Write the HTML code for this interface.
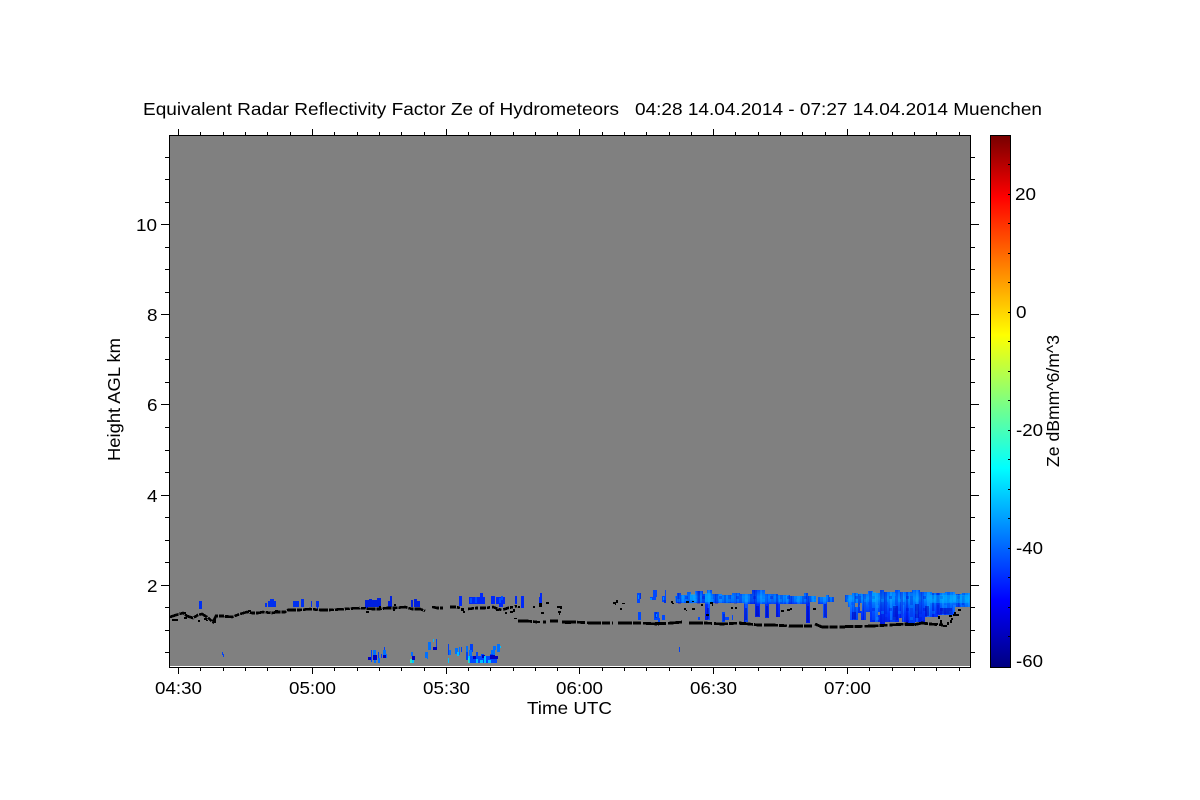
<!DOCTYPE html>
<html>
<head>
<meta charset="utf-8">
<title>Equivalent Radar Reflectivity Factor Ze of Hydrometeors</title>
<style>
html,body{margin:0;padding:0;background:#fff;width:1200px;height:800px;overflow:hidden}
svg{display:block}
text{font-family:"Liberation Sans",Arial,sans-serif;font-size:17.5px;fill:#000}
</style>
</head>
<body>
<svg width="1200" height="800" viewBox="0 0 1200 800" xmlns="http://www.w3.org/2000/svg">
<defs>
<linearGradient id="jet" x1="0" y1="0" x2="0" y2="1">
<stop offset="0" stop-color="#780000"/>
<stop offset=".115" stop-color="#ff0000"/>
<stop offset=".375" stop-color="#ffff00"/>
<stop offset=".625" stop-color="#00ffff"/>
<stop offset=".875" stop-color="#0000ff"/>
<stop offset="1" stop-color="#000080"/>
</linearGradient>
<linearGradient id="bandG" gradientUnits="userSpaceOnUse" x1="0" y1="590" x2="0" y2="624">
<stop offset="0" stop-color="#0048ff"/>
<stop offset=".2" stop-color="#0080ff"/>
<stop offset=".33" stop-color="#0070ff"/>
<stop offset=".42" stop-color="#0030ff"/>
<stop offset="1" stop-color="#0018e0"/>
</linearGradient>
<linearGradient id="bandR" gradientUnits="userSpaceOnUse" x1="0" y1="590" x2="0" y2="624">
<stop offset="0" stop-color="#0060ff"/>
<stop offset=".25" stop-color="#0090ff"/>
<stop offset=".45" stop-color="#0060ff"/>
<stop offset=".7" stop-color="#0034ff"/>
<stop offset="1" stop-color="#0020e8"/>
</linearGradient>
<pattern id="st1" patternUnits="userSpaceOnUse" x="0" y="0" width="26" height="40">
<rect x="0" y="0" width="3" height="40" fill="#0020e0" fill-opacity=".5"/>
<rect x="6" y="0" width="2" height="40" fill="#20c0ff" fill-opacity=".3"/>
<rect x="11" y="0" width="3" height="40" fill="#0030f0" fill-opacity=".45"/>
<rect x="17" y="0" width="3" height="40" fill="#30c8ff" fill-opacity=".25"/>
<rect x="22" y="0" width="2" height="40" fill="#0000c0" fill-opacity=".35"/>
</pattern>
<pattern id="st2" patternUnits="userSpaceOnUse" x="0" y="0" width="37" height="40">
<rect x="2" y="0" width="5" height="40" fill="#00b0ff" fill-opacity=".2"/>
<rect x="12" y="0" width="3" height="40" fill="#0000d0" fill-opacity=".35"/>
<rect x="21" y="0" width="6" height="40" fill="#00a0ff" fill-opacity=".2"/>
<rect x="31" y="0" width="3" height="40" fill="#0010d0" fill-opacity=".3"/>
</pattern>
<pattern id="st3" patternUnits="userSpaceOnUse" x="1" y="590" width="17" height="12">
<rect x="0" y="0" width="3" height="3" fill="#0040ff" fill-opacity=".4"/>
<rect x="8" y="3" width="3" height="3" fill="#00a0ff" fill-opacity=".35"/>
<rect x="4" y="6" width="3" height="3" fill="#0000d8" fill-opacity=".35"/>
<rect x="13" y="9" width="3" height="3" fill="#00b0ff" fill-opacity=".3"/>
</pattern>
</defs>

<!-- plot background -->
<rect x="170" y="136" width="800" height="530" fill="#808080"/>
<rect x="170" y="666" width="800" height="1" fill="#fff"/>

<g shape-rendering="crispEdges">
<!-- upper sparse echoes -->
<path fill="#0030f0" d="M199 601h3v8h-3zM265 603h2v4h-2zM268 601h8v6h-8zM270 599h4v2h-4zM293 601h6v6h-6zM301 599h3v8h-3zM311 601h1v6h-1zM316 601h3v6h-3zM317 607h1v2h-1z"/>
<path fill="#0020e0" d="M365 600h16v7h-16zM365 607h3v1h-3zM369 599h3v1h-3zM377 598h4v2h-4zM388 601h4v6h-4zM390 596h2v5h-2zM411 600h2v7h-2zM414 599h3v8h-3zM417 601h3v6h-3z"/>
<path fill="#0028f8" d="M459 596h3v10h-3zM469 597h16v7h-16zM480 593h3v4h-3zM491 596h4v8h-4zM496 597h9v7h-9zM499 604h4v3h-4zM515 596h2v8h-2zM521 596h3v12h-3zM539 597h3v8h-3zM540 593h2v4h-2z"/>
<path fill="#0050ff" d="M470 598h2v5h-2zM475 597h2v6h-2zM499 598h2v5h-2zM501 596h2v4h-2z"/>

<!-- lower cluster -->
<path fill="#0040f8" d="M371 650h1v12h-1zM222 652h1v3h-1zM223 654h1v3h-1zM378 652h1v6h-1zM381 654h1v4h-1zM384 647h1v11h-1zM448 644h1v11h-1zM436 639h1v11h-1zM466 652h2v8h-2zM470 644h3v8h-3zM461 647h1v5h-1zM679 647h1v5h-1z"/>
<path fill="#0070ff" d="M373 650h3v5h-3zM374 660h2v3h-2zM378 658h2v5h-2zM383 650h3v5h-3zM386 654h1v4h-1zM411 652h2v4h-2zM428 642h3v8h-3zM425 652h3v6h-3zM427 656h1v3h-1zM455 648h3v6h-3zM459 647h1v8h-1zM449 650h2v5h-2zM466 646h2v6h-2zM469 650h3v8h-3zM491 650h4v5h-4zM497 644h3v8h-3zM493 646h3v4h-3z"/>
<path fill="#0048ff" d="M470 656h27v7h-27zM476 652h2v4h-2zM481 654h3v4h-3zM490 654h3v4h-3z"/>
<path fill="#0000c0" d="M368 657h3v3h-3zM373 655h4v5h-4zM383 655h3v3h-3zM412 656h3v4h-3zM433 647h4v3h-4zM473 656h3v3h-3zM482 655h3v3h-3zM490 655h5v4h-5zM494 656h4v3h-4z"/>
<path fill="#00c0ff" d="M412 660h2v3h-2zM448 658h1v5h-1zM457 652h2v4h-2zM468 656h2v7h-2zM476 659h2v4h-2zM484 656h2v7h-2zM480 660h3v3h-3zM488 660h3v3h-3zM433 639h1v3h-1zM500 646h1v2h-1z"/>
<path fill="#30e0c0" d="M410 659h2v4h-2zM468 658h1v5h-1z"/>

<!-- mid area sparse echoes -->
<path fill="#0048ff" d="M637 593h3v10h-3zM638 612h3v8h-3zM650 597h6v3h-6zM653 590h4v7h-4zM654 612h5v8h-5zM658 618h2v4h-2zM662 596h4v6h-4zM665 590h1v6h-1zM662 615h3v5h-3zM698 617h2v3h-2zM722 612h3v10h-3zM725 617h4v3h-4zM732 615h1v5h-1z"/>
<path fill="#0030e0" d="M664 600h2v3h-2zM640 593h1v6h-1zM655 612h2v6h-2zM723 614h2v7h-2z"/>
<path fill="#0090ff" d="M650 598h2v2h-2zM638 595h1v4h-1zM656 614h1v3h-1zM663 597h1v3h-1z"/>

<!-- main bands -->
<path fill="url(#bandG)" d="M675 596H677V593H681V595H687V592H691V595H695V591H703V594H707V590H712V594H722V595H732V593H740V594H752V590H765V594H778V595H790V596H804V593H808V596H816V602H810V623H806V604H780V617H776V604H769V618H765V604H760V617H755V604H748V622H744V603H710V620H705V603H676Z"/>
<path fill="url(#bandG)" d="M818 597H826V595H829V597H834V602H827V618H823V604H818Z"/>
<path fill="url(#bandR)" d="M845 595H852V593H858V594H868V591H873V593H880V590H884V592H895V590H900V592H912V590H920V592H932V593H945V592H955V594H962V593H970V607H955V615H938V617H925V622H915V624H906V622H885V624H880V622H870V612H866V620H861V613H858V620H850V607H848V602H845Z"/>
<path fill="url(#st1)" d="M675 596H677V593H681V595H687V592H691V595H695V591H703V594H707V590H712V594H722V595H732V593H740V594H752V590H765V594H778V595H790V596H804V593H808V596H816V602H810V623H806V604H780V617H776V604H769V618H765V604H760V617H755V604H748V622H744V603H710V620H705V603H676ZM818 597H826V595H829V597H834V602H827V618H823V604H818ZM845 595H852V593H858V594H868V591H873V593H880V590H884V592H895V590H900V592H912V590H920V592H932V593H945V592H955V594H962V593H970V607H955V615H938V617H925V622H915V624H906V622H885V624H880V622H870V612H866V620H861V613H858V620H850V607H848V602H845Z"/>
<path fill="url(#st2)" d="M675 596H677V593H681V595H687V592H691V595H695V591H703V594H707V590H712V594H722V595H732V593H740V594H752V590H765V594H778V595H790V596H804V593H808V596H816V602H810V604H676ZM845 595H852V593H858V594H868V591H873V593H880V590H884V592H895V590H900V592H912V590H920V592H932V593H945V592H955V594H962V593H970V607H955V615H938V617H925V622H915V624H906V622H885V624H880V622H870V612H866V620H861V613H858V620H850V607H848V602H845Z"/>
<path fill="url(#st3)" d="M675 596H816V602H676ZM845 593H970V607H955V615H938V617H925V622H870V607H845Z"/>
<path fill="#00b8ff" fill-opacity=".45" d="M930 595h39v8h-39zM705 593h6v9h-6zM690 594h5v6h-5zM872 592h4v10h-4z"/>
<path fill="#0000b8" fill-opacity=".5" d="M756 606h3v10h-3zM766 606h2v11h-2zM807 606h2v16h-2zM824 604h2v13h-2zM745 608h2v12h-2zM707 608h2v11h-2zM893 606h5v14h-5zM915 604h4v14h-4zM925 606h4v10h-4zM940 608h12v6h-12zM852 612h4v7h-4z"/>
<path fill="#808080" d="M855 603h3v4h-3zM878 612h2v3h-2zM899 618h3v4h-3zM860 603h2v8h-2z"/>

<!-- melting/ceilometer line (black) -->
<g fill="none" stroke="#000" stroke-width="3">
<path stroke-width="2.600" stroke-dasharray="9 1 5 1" d="M170 617L176 615 183 613 187 616 193 618 198 615 202 614 207 617 213 622 216 616 224 616 232 617 240 614 247 612 252 613 258 613 263 612 272 613 277 612 285 612 288 610 292 610 300 610 310 609 320 610 330 610 345 609 360 608 372 609 380 609 387 608 395 608 405 607 412 609 420 609 425 611"/>
<path stroke-width="2.600" stroke-dasharray="6 1 3 2" d="M433 607L437 608 443 608M450 607L456 607 460 608M468 609L476 608 485 608 493 607 498 609 502 610 508 608 513 607 517 606"/>
<path stroke-width="2.800" stroke-dasharray="14 1 8 2" d="M518 621L527 621 537 622M543 622L546 622M550 621L558 621M562 622L575 622 590 623 613 623M618 623L640 623 657 624 672 623 683 622M689 623L705 623 722 624 740 623 758 625 773 625 790 626 812 626M815 624L822 627 840 627 873 626 890 625 907 624 913 625 922 623 930 624 943 625"/>
</g>
<path fill="#000" d="M172 619h6v2h-6zM184 617h3v2h-3zM214 619h2v4h-2zM182 612h4v2h-4zM198 620h2v2h-2zM204 618h3v2h-3zM206 620h2v1h-2zM225 616h3v2h-3zM248 610h3v2h-3zM275 610h3v2h-3zM366 611h3v2h-3zM379 606h2v3h-2zM393 607h2v4h-2zM394 604h2v2h-2zM432 606h2v2h-2zM461 608h3v3h-3zM463 611h2v2h-2zM496 609h3v2h-3zM510 611h3v2h-3zM505 612h2v2h-2zM513 609h2v3h-2zM518 606h2v2h-2zM535 621h5v2h-5zM565 622h6v2h-6zM655 622h8v3h-8zM740 622h6v3h-6zM845 625h7v3h-7zM905 623h9v3h-9z"/>
<path fill="#000" d="M533 606h2v2h-2zM539 603h3v4h-3zM546 602h3v2h-3zM541 612h3v2h-3zM557 606h3v2h-3zM560 606h2v3h-2zM558 611h3v2h-3zM559 613h1v2h-1zM613 602h3v2h-3zM615 604h1v1h-1zM616 600h2v3h-2zM622 603h3v1h-3zM620 608h2v2h-2zM671 601h2v2h-2zM672 603h2v1h-2zM686 601h3v2h-3zM692 601h2v1h-2zM684 608h2v2h-2zM686 610h1v1h-1zM692 608h3v2h-3zM701 604h2v2h-2zM710 602h3v2h-3zM712 604h1v2h-1zM706 614h3v2h-3zM731 607h2v2h-2zM735 607h2v2h-2zM781 610h3v2h-3zM787 609h3v2h-3zM790 608h2v2h-2zM813 608h3v2h-3zM514 618h3v1h-3z"/>
<path fill="#000" d="M940 620h2v5h-2zM943 625h4v2h-4zM947 622h2v3h-2zM950 620h2v3h-2zM938 616h2v3h-2zM949 615h3v2h-3zM953 614h6v2h-6zM951 618h2v2h-2zM954 612h2v2h-2zM958 609h3v2h-3zM934 623h4v2h-4z"/>

<!-- axes -->
<g fill="#000">
<rect x="169" y="135" width="802" height="1"/>
<rect x="169" y="667" width="802" height="1"/>
<rect x="169" y="135" width="1" height="533"/>
<rect x="970" y="135" width="1" height="533"/>
</g>
<path fill="none" stroke="#000" stroke-width="1" d="
M178.5 668V674M312.5 668V674M446.5 668V674M579.5 668V674M713.5 668V674M847.5 668V674
M178.5 135V129M312.5 135V129M446.5 135V129M579.5 135V129M713.5 135V129M847.5 135V129
M200.5 668v3M223.5 668v3M245.5 668v3M267.5 668v3M290.5 668v3M334.5 668v3M357.5 668v3M379.5 668v3M401.5 668v3M424.5 668v3M468.5 668v3M490.5 668v3M513.5 668v3M535.5 668v3M557.5 668v3M602.5 668v3M624.5 668v3M646.5 668v3M669.5 668v3M691.5 668v3M735.5 668v3M758.5 668v3M780.5 668v3M802.5 668v3M825.5 668v3M869.5 668v3M892.5 668v3M914.5 668v3M936.5 668v3M959.5 668v3
M200.5 135v-3M223.5 135v-3M245.5 135v-3M267.5 135v-3M290.5 135v-3M334.5 135v-3M357.5 135v-3M379.5 135v-3M401.5 135v-3M424.5 135v-3M468.5 135v-3M490.5 135v-3M513.5 135v-3M535.5 135v-3M557.5 135v-3M602.5 135v-3M624.5 135v-3M646.5 135v-3M669.5 135v-3M691.5 135v-3M735.5 135v-3M758.5 135v-3M780.5 135v-3M802.5 135v-3M825.5 135v-3M869.5 135v-3M892.5 135v-3M914.5 135v-3M936.5 135v-3M959.5 135v-3
M161 224.5h8M161 314.5h8M161 404.5h8M161 495.5h8M161 585.5h8
M971 224.5h8M971 314.5h8M971 404.5h8M971 495.5h8M971 585.5h8
M165 157.5h4M165 179.5h4M165 202.5h4M165 247.5h4M165 269.5h4M165 292.5h4M165 337.5h4M165 359.5h4M165 382.5h4M165 427.5h4M165 450.5h4M165 472.5h4M165 517.5h4M165 540.5h4M165 562.5h4M165 607.5h4M165 630.5h4M165 652.5h4
M971 157.5h4M971 179.5h4M971 202.5h4M971 247.5h4M971 269.5h4M971 292.5h4M971 337.5h4M971 359.5h4M971 382.5h4M971 427.5h4M971 450.5h4M971 472.5h4M971 517.5h4M971 540.5h4M971 562.5h4M971 607.5h4M971 630.5h4M971 652.5h4"/>

<!-- colorbar -->
<rect x="990" y="135" width="21" height="533" fill="#000"/>
<rect x="991" y="136" width="19" height="531" fill="url(#jet)"/>
<path fill="none" stroke="#000" stroke-width="1" d="M1008 164.500h2M1008 194.500h2M1008 223.500h2M1008 253.500h2M1008 282.500h2M1008 312.500h2M1008 341.500h2M1008 371.500h2M1008 400.500h2M1008 430.500h2M1008 459.500h2M1008 489.500h2M1008 518.500h2M1008 548.500h2M1008 577.500h2M1008 607.500h2M1008 636.500h2"/>
</g>

<!-- title -->
<text x="143" y="115" textLength="476" lengthAdjust="spacingAndGlyphs">Equivalent Radar Reflectivity Factor Ze of Hydrometeors</text>
<text x="635" y="115" textLength="407" lengthAdjust="spacingAndGlyphs">04:28 14.04.2014 - 07:27 14.04.2014 Muenchen</text>

<!-- y labels -->
<text x="136" y="231" textLength="21" lengthAdjust="spacingAndGlyphs">10</text>
<text x="147" y="321" textLength="10.500" lengthAdjust="spacingAndGlyphs">8</text>
<text x="147" y="411" textLength="10.500" lengthAdjust="spacingAndGlyphs">6</text>
<text x="147" y="502" textLength="10.500" lengthAdjust="spacingAndGlyphs">4</text>
<text x="147" y="592" textLength="10.500" lengthAdjust="spacingAndGlyphs">2</text>

<!-- x labels -->
<text x="155" y="694" textLength="47" lengthAdjust="spacingAndGlyphs">04:30</text>
<text x="289" y="694" textLength="47" lengthAdjust="spacingAndGlyphs">05:00</text>
<text x="423" y="694" textLength="47" lengthAdjust="spacingAndGlyphs">05:30</text>
<text x="556" y="694" textLength="47" lengthAdjust="spacingAndGlyphs">06:00</text>
<text x="690" y="694" textLength="47" lengthAdjust="spacingAndGlyphs">06:30</text>
<text x="824" y="694" textLength="47" lengthAdjust="spacingAndGlyphs">07:00</text>

<text x="527" y="714" textLength="85" lengthAdjust="spacingAndGlyphs">Time UTC</text>
<text transform="translate(120 461) rotate(-90)" textLength="123" lengthAdjust="spacingAndGlyphs">Height AGL km</text>

<!-- colorbar labels -->
<text x="1015" y="200" textLength="21" lengthAdjust="spacingAndGlyphs">20</text>
<text x="1016" y="318" textLength="10.500" lengthAdjust="spacingAndGlyphs">0</text>
<text x="1016" y="436" textLength="27" lengthAdjust="spacingAndGlyphs">-20</text>
<text x="1016" y="554" textLength="27" lengthAdjust="spacingAndGlyphs">-40</text>
<text x="1016" y="667" textLength="27" lengthAdjust="spacingAndGlyphs">-60</text>
<text transform="translate(1059 467) rotate(-90)" textLength="132" lengthAdjust="spacingAndGlyphs">Ze dBmm^6/m^3</text>
</svg>
</body>
</html>
